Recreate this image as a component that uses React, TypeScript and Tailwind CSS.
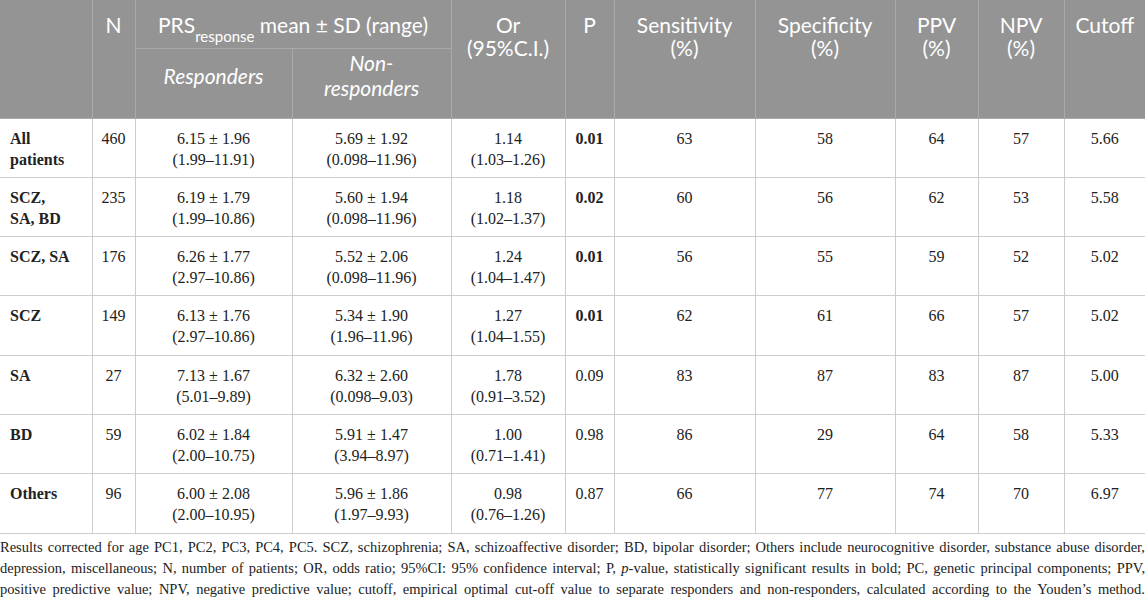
const rows = [
  { g: ["All", "patients"], n: "460", r: ["6.15 ± 1.96", "(1.99–11.91)"], nr: ["5.69 ± 1.92", "(0.098–11.96)"], or: ["1.14", "(1.03–1.26)"], p: "0.01", bold: true, se: "63", sp: "58", ppv: "64", npv: "57", cut: "5.66" },
  { g: ["SCZ,", "SA, BD"], n: "235", r: ["6.19 ± 1.79", "(1.99–10.86)"], nr: ["5.60 ± 1.94", "(0.098–11.96)"], or: ["1.18", "(1.02–1.37)"], p: "0.02", bold: true, se: "60", sp: "56", ppv: "62", npv: "53", cut: "5.58" },
  { g: ["SCZ, SA"], n: "176", r: ["6.26 ± 1.77", "(2.97–10.86)"], nr: ["5.52 ± 2.06", "(0.098–11.96)"], or: ["1.24", "(1.04–1.47)"], p: "0.01", bold: true, se: "56", sp: "55", ppv: "59", npv: "52", cut: "5.02" },
  { g: ["SCZ"], n: "149", r: ["6.13 ± 1.76", "(2.97–10.86)"], nr: ["5.34 ± 1.90", "(1.96–11.96)"], or: ["1.27", "(1.04–1.55)"], p: "0.01", bold: true, se: "62", sp: "61", ppv: "66", npv: "57", cut: "5.02" },
  { g: ["SA"], n: "27", r: ["7.13 ± 1.67", "(5.01–9.89)"], nr: ["6.32 ± 2.60", "(0.098–9.03)"], or: ["1.78", "(0.91–3.52)"], p: "0.09", bold: false, se: "83", sp: "87", ppv: "83", npv: "87", cut: "5.00" },
  { g: ["BD"], n: "59", r: ["6.02 ± 1.84", "(2.00–10.75)"], nr: ["5.91 ± 1.47", "(3.94–8.97)"], or: ["1.00", "(0.71–1.41)"], p: "0.98", bold: false, se: "86", sp: "29", ppv: "64", npv: "58", cut: "5.33" },
  { g: ["Others"], n: "96", r: ["6.00 ± 2.08", "(2.00–10.95)"], nr: ["5.96 ± 1.86", "(1.97–9.93)"], or: ["0.98", "(0.76–1.26)"], p: "0.87", bold: false, se: "66", sp: "77", ppv: "74", npv: "70", cut: "6.97" },
];

const th = "border border-[#a9a9a9] font-normal px-1";
const top = `${th} align-top pt-[13px]`;
const td = "border border-[#cdcdcd] align-top text-center pt-[9px] px-1";

function Lines({ items }: { items: string[] }) {
  return (
    <>
      {items.map((t, i) => (
        <div key={i}>{t}</div>
      ))}
    </>
  );
}

export default function App() {
  return (
    <div className="w-[1145px] h-[599px] bg-white overflow-hidden">
      <table
        className="table-fixed border-collapse w-[1145px] border-hidden"
        style={{ fontFamily: '"Liberation Serif", serif' }}
      >
        <colgroup>
          <col className="w-[92px]" />
          <col className="w-[43px]" />
          <col className="w-[157px]" />
          <col className="w-[159px]" />
          <col className="w-[114px]" />
          <col className="w-[49px]" />
          <col className="w-[141px]" />
          <col className="w-[140px]" />
          <col className="w-[83px]" />
          <col className="w-[86px]" />
          <col className="w-[81px]" />
        </colgroup>
        <thead
          className="bg-[#949494] text-white text-[21px] leading-[23px]"
          style={{ fontFamily: 'Lato, "Open Sans", sans-serif' }}
        >
          <tr className="h-[48px]">
            <th rowSpan={2} className={`${th} align-top`}></th>
            <th rowSpan={2} className={top}>N</th>
            <th colSpan={2} className={`${top} whitespace-nowrap`}>
              PRS<sub className="text-[15px] align-[-5px]">response</sub> mean ± SD (range)
            </th>
            <th rowSpan={2} className={top}>Or<br />(95%C.I.)</th>
            <th rowSpan={2} className={top}>P</th>
            <th rowSpan={2} className={top}>Sensitivity<br />(%)</th>
            <th rowSpan={2} className={top}>Specificity<br />(%)</th>
            <th rowSpan={2} className={top}>PPV<br />(%)</th>
            <th rowSpan={2} className={top}>NPV<br />(%)</th>
            <th rowSpan={2} className={top}>Cutoff</th>
          </tr>
          <tr className="h-[70px]">
            <th className={`${th} italic align-middle pb-[16px] leading-[25px]`}>Responders</th>
            <th className={`${th} italic align-middle pb-[16px] leading-[25px]`}>Non-<br />responders</th>
          </tr>
        </thead>
        <tbody className="text-[16px] leading-[21px] text-[#222]">
          {rows.map((r, i) => (
            <tr key={i} className="h-[59.3px]">
              <td className={`${td} text-left pl-[10px] font-bold`}>
                <Lines items={r.g} />
              </td>
              <td className={td}>{r.n}</td>
              <td className={td}><Lines items={r.r} /></td>
              <td className={td}><Lines items={r.nr} /></td>
              <td className={td}><Lines items={r.or} /></td>
              <td className={`${td} ${r.bold ? "font-bold" : ""}`}>{r.p}</td>
              <td className={td}>{r.se}</td>
              <td className={td}>{r.sp}</td>
              <td className={td}>{r.ppv}</td>
              <td className={td}>{r.npv}</td>
              <td className={td}>{r.cut}</td>
            </tr>
          ))}
          <tr className="h-0">
            <td colSpan={11} className="border-t border-[#bdbdbd] p-0"></td>
          </tr>
        </tbody>
      </table>
      <p
        className="pt-[3px] text-[14.5px] leading-[21px] text-[#222] text-justify [text-align-last:justify]"
        style={{ fontFamily: '"Liberation Serif", serif' }}
      >
        Results corrected for age PC1, PC2, PC3, PC4, PC5. SCZ, schizophrenia; SA, schizoaffective disorder; BD, bipolar disorder; Others include neurocognitive disorder, substance abuse disorder, depression, miscellaneous; N, number of patients; OR, odds ratio; 95%CI: 95% confidence interval; P, <i>p</i>-value, statistically significant results in bold; PC, genetic principal components; PPV, positive predictive value; NPV, negative predictive value; cutoff, empirical optimal cut-off value to separate responders and non-responders, calculated according to the Youden’s method.
      </p>
    </div>
  );
}
